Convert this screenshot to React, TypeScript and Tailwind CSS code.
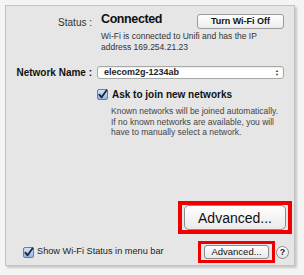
import React from "react";

const font = { fontFamily: '"Liberation Sans", Arial, sans-serif' };

const Check = ({ size = 11 }: { size?: number }) => (
  <svg width={size} height={size} viewBox="0 0 11 11" className="shrink-0">
    <defs>
      <linearGradient id="cb" x1="0" y1="0" x2="0" y2="1">
        <stop offset="0" stopColor="#d6e6fb" />
        <stop offset="1" stopColor="#8fb4e6" />
      </linearGradient>
    </defs>
    <rect x="0.5" y="0.5" width="10" height="10" rx="1.5" fill="url(#cb)" stroke="#5d7fb3" />
    <path d="M2.3 5.6 L4.6 8.3 L9.6 1.2" fill="none" stroke="#1c2440" strokeWidth="1.8" strokeLinecap="round" strokeLinejoin="round" />
  </svg>
);

const App = () => {
  return (
    <div className="w-[304px] h-[275px] bg-[#f4f4f4] pt-[5px] pl-[5px]" style={font}>
      <div className="w-[290px] h-[261px] border border-[#c2c2c2] bg-[#e6e6e6] shadow-[2px_2px_2px_rgba(0,0,0,0.18)] flex flex-col text-[#111]">
        {/* status */}
        <div className="flex items-start pt-[5px]">
          <div className="w-[86px] text-right text-[10px] text-[#333] pt-[4px]">Status :</div>
          <div className="ml-[9px] text-[12.5px] font-bold tracking-[-0.4px] leading-[17px]">Connected</div>
          <button className="ml-auto mr-[10px] mt-[3px] w-[87px] h-[15px] rounded-[3px] border border-[#9a9a9a] bg-gradient-to-b from-white to-[#ececec] text-[9px] font-bold leading-[13px]">
            Turn Wi-Fi Off
          </button>
        </div>
        <div className="ml-[95px] mt-[1px] text-[8.5px] leading-[11px] text-[#333] w-[160px]">
          Wi-Fi is connected to Unifi and has the IP address 169.254.21.23
        </div>

        {/* network name */}
        <div className="flex items-center mt-[12px]">
          <div className="w-[86px] text-right text-[10px] font-bold">Network Name :</div>
          <div className="ml-[5px] w-[187px] h-[13px] rounded-[3px] border border-[#a8a8a8] bg-white flex items-center pl-[6px] pr-[4px] shadow-[inset_0_1px_1px_rgba(0,0,0,0.08)]">
            <span className="text-[9px] font-bold text-[#222] leading-none">elecom2g-1234ab</span>
            <span className="ml-auto flex flex-col text-[4px] leading-[4px] text-[#444]">
              <span>▲</span>
              <span>▼</span>
            </span>
          </div>
        </div>

        {/* ask to join */}
        <div className="flex items-center ml-[91px] mt-[8px]">
          <Check />
          <span className="ml-[4px] text-[10px] font-bold leading-[13px]">Ask to join new networks</span>
        </div>
        <div className="ml-[105px] mt-[5px] text-[8.5px] leading-[10.5px] text-[#444] w-[170px]">
          Known networks will be joined automatically. If no known networks are available, you will have to manually select a network.
        </div>

        {/* big advanced */}
        <div className="flex justify-end mt-auto mr-[2px] mb-[7px]">
          <div className="border-[4px] border-[#ee0000] px-[2px] py-[0px]">
            <button className="w-[102px] h-[25px] rounded-[5px] border border-[#8c8c8c] bg-gradient-to-b from-white to-[#e9e9e9] text-[14px] leading-[20px] text-[#111]">
              Advanced...
            </button>
          </div>
        </div>

        {/* bottom row */}
        <div className="flex items-center mb-[2px]">
          <div className="ml-[17px]">
            <Check />
          </div>
          <span className="ml-[3px] text-[9.2px] text-[#222]">Show Wi-Fi Status in menu bar</span>
          <div className="ml-auto border-[3px] border-[#ee0000] px-[3px] py-[1px]">
            <button className="block w-[65px] h-[14px] rounded-[3px] border border-[#8c8c8c] bg-gradient-to-b from-white to-[#e9e9e9] text-[9.5px] leading-[12px] text-[#111]">
              Advanced...
            </button>
          </div>
          <div className="ml-[1px] mr-[5px] w-[13px] h-[13px] rounded-full border border-[#8c8c8c] bg-gradient-to-b from-white to-[#e4e4e4] flex items-center justify-center text-[9px] font-bold leading-none text-[#222]">
            ?
          </div>
        </div>
      </div>
    </div>
  );
};

export default App;
